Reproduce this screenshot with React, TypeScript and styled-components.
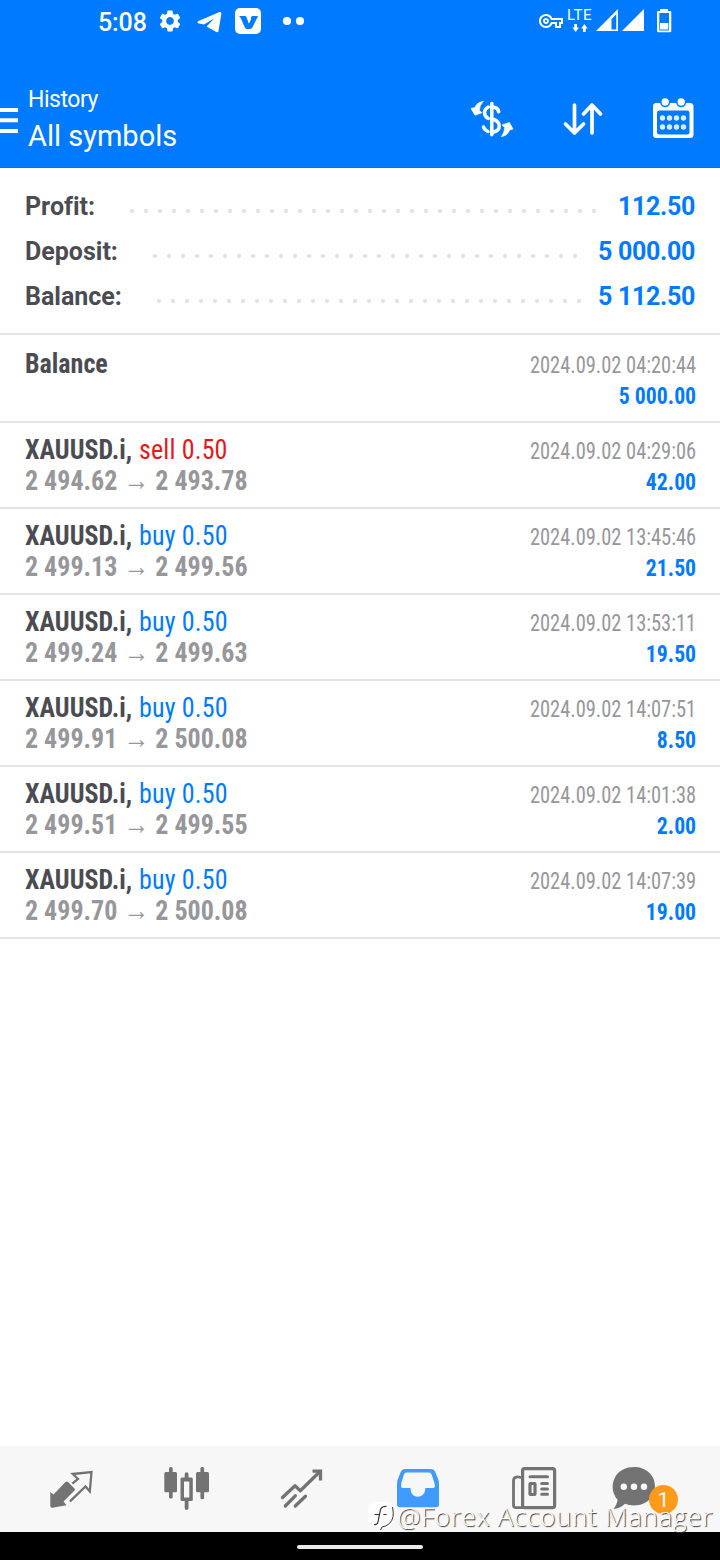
import React from 'react';
import styled, { createGlobalStyle } from 'styled-components';
import { MdSettings, MdOutlineVpnKey } from 'react-icons/md';

const GlobalStyle = createGlobalStyle`
  * { box-sizing: border-box; }
  body { margin: 0; background: #fff; font-family: Roboto, "Liberation Sans", sans-serif; }
`;

const Screen = styled.div`
  position: relative;
  width: 720px;
  height: 1560px;
  display: flex;
  flex-direction: column;
  background: #fff;
  overflow: hidden;
`;

const TopArea = styled.header`
  height: 168px;
  background: #007aff;
  color: #fff;
  border-bottom: 1px solid #0070e6;
`;

const StatusBar = styled.div`
  height: 42px;
  display: flex;
  justify-content: space-between;
  align-items: flex-start;
  padding: 0 48px 0 98px;
`;

const StatusGroup = styled.div`
  height: 42px;
  display: flex;
  align-items: center;
`;

const Clock = styled.span`
  width: 59px;
  font-size: 25px;
  font-weight: 500;
  line-height: 30px;
  padding-top: 3px;
  letter-spacing: -0.1px;
`;

const Glyph = styled.svg`
  display: block;
  flex: none;
`;

const TitleBar = styled.div`
  height: 125px;
  display: flex;
  align-items: flex-start;
`;

const Titles = styled.div`
  flex: 1;
  padding: 44px 0 0 10px;
`;

const Kicker = styled.div`
  font-size: 23px;
  line-height: 27px;
  letter-spacing: -0.45px;
`;

const Title = styled.h1`
  margin: 5px 0 0;
  font-size: 30px;
  font-weight: 400;
  line-height: 35px;
  transform: scaleX(0.967);
  transform-origin: left;
`;

const Summary = styled.section`
  height: 167px;
  padding: 16px 25px 0;
  border-bottom: 2px solid #e4e4e4;
`;

const SummaryLine = styled.div`
  height: 45px;
  display: flex;
  align-items: center;
  font-size: 25px;
  font-weight: 700;
  font-variant-ligatures: none;
  color: #4b4b52;
`;

const Leader = styled.div`
  flex: 1;
  height: 4px;
  margin: 9px 16px 0 30px;
  background: radial-gradient(circle at 7px 2px, #e3e3e3 1.8px, rgba(227, 227, 227, 0) 2.5px) 0 0 / 14px 4px repeat-x;
`;

const SummaryValue = styled.span`
  color: #007aff;
  letter-spacing: -0.32px;
`;

const Row = styled.li<{ $tall?: boolean }>`
  height: ${(p) => (p.$tall ? 88 : 86)}px;
  display: flex;
  justify-content: space-between;
  padding: ${(p) => (p.$tall ? 13 : 11)}px 24px 0 25px;
  border-bottom: 2px solid #e4e4e4;
  font-stretch: 75%;
`;

const List = styled.ul`
  flex: 1;
  margin: 0;
  padding: 0;
  list-style: none;
`;

const Deal = styled.div`
  font-size: 28px;
  line-height: 31px;
  font-weight: 700;
  transform: scaleX(0.928);
  transform-origin: left;
  color: #4b4b52;
`;

const Side = styled.span<{ $sell?: boolean }>`
  margin-left: 1px;
  font-weight: 400;
  letter-spacing: 0.15px;
  color: ${(p) => (p.$sell ? '#e5171b' : '#007aff')};
`;

const Prices = styled.div`
  color: #97979b;
`;

const Result = styled.div`
  padding-top: 2px;
  text-align: right;
  font-size: 23px;
  line-height: 31px;
`;

const Time = styled.div`
  transform: scaleX(0.888);
  transform-origin: right;
  color: #97979b;
`;

const Amount = styled.div`
  font-weight: 700;
  transform: scaleX(0.945);
  transform-origin: right;
  color: #007aff;
`;

const TabBar = styled.nav`
  height: 86px;
  display: flex;
  background: #f7f7f7;
  padding: 0 12px;
`;

const Tab = styled.div`
  position: relative;
  flex: 1;
  display: flex;
  justify-content: center;
  padding-top: 16px;
`;

const Badge = styled.span`
  position: absolute;
  left: 57px;
  top: 39px;
  width: 29px;
  height: 29px;
  border-radius: 50%;
  background: #ff9a1a;
  color: #fff;
  font-size: 21px;
  line-height: 30px;
  text-align: center;
`;

const GestureBar = styled.div`
  height: 28px;
  background: #000;
  display: flex;
  justify-content: center;
  padding-top: 13px;
`;

const Pill = styled.div`
  width: 126px;
  height: 4px;
  border-radius: 2px;
  background: #e9e9e9;
`;

const Watermark = styled.div`
  position: absolute;
  right: 7px;
  bottom: 27px;
  display: flex;
  align-items: center;
  gap: 2px;
  color: #fff;
  font-family: "Open Sans", sans-serif;
  font-weight: 300;
  font-size: 26px;
  line-height: 34px;
  letter-spacing: 0.7px;
  text-shadow: 1px 1px 1px #333;
`;

const summary = [
  ['Profit:', '112.50'],
  ['Deposit:', '5 000.00'],
  ['Balance:', '5 112.50'],
];

const deals = [
  { side: 'sell', open: '2 494.62', close: '2 493.78', time: '2024.09.02 04:29:06', amount: '42.00' },
  { side: 'buy', open: '2 499.13', close: '2 499.56', time: '2024.09.02 13:45:46', amount: '21.50' },
  { side: 'buy', open: '2 499.24', close: '2 499.63', time: '2024.09.02 13:53:11', amount: '19.50' },
  { side: 'buy', open: '2 499.91', close: '2 500.08', time: '2024.09.02 14:07:51', amount: '8.50' },
  { side: 'buy', open: '2 499.51', close: '2 499.55', time: '2024.09.02 14:01:38', amount: '2.00' },
  { side: 'buy', open: '2 499.70', close: '2 500.08', time: '2024.09.02 14:07:39', amount: '19.00' },
];

const GREY = '#737373';

const tabs = [
  {
    name: 'quotes',
    icon: (
      <>
        <path d="M10.300 30L13.500 32.500L25.500 20Q26.700 19 28 20L34.500 26.500Q35.500 27.500 34.500 28.500L23.500 39.500L26.500 43.300L12.500 45.700Q10.300 46 10.300 44Z" fill={GREY} />
        <path d="M32.300 21.700L38 17L32.700 12L51.500 10L49.800 29.500L45.500 24.500L30 39.300" fill="none" stroke={GREY} strokeWidth="2.300" />
      </>
    ),
  },
  {
    name: 'charts',
    icon: (
      <g fill={GREY}>
        <rect x="8.300" y="10" width="12.700" height="20.300" rx="1.500" />
        <rect x="13" y="5" width="3.700" height="31.500" rx="1.500" />
        <path fillRule="evenodd" d="M26 15.500h9.300q1.500 0 1.500 1.500v20.500q0 1.500-1.500 1.500H26q-1.500 0-1.500-1.500V17q0-1.500 1.500-1.500zM28 19.500v16h5.300v-16z" />
        <path d="M28.700 16v-4q0-1.700 1.900-1.700t1.900 1.700v4zM28.700 38.500v7.800q0 1.700 1.900 1.700t1.900-1.700v-7.800z" />
        <rect x="40" y="10" width="13" height="20.300" rx="1.500" />
        <rect x="44.400" y="5" width="3.700" height="32.300" rx="1.500" />
      </g>
    ),
  },
  {
    name: 'trade',
    icon: (
      <g fill="none" stroke={GREY} strokeWidth="3.300" strokeLinecap="round" strokeLinejoin="round">
        <path d="M10.500 35.500L23 23.700L28.300 28.700L47.500 10M13.300 44L23.300 33.800M23.300 44L33.500 34.200" />
        <path d="M40.500 9.200H48.500V18.500" strokeLinecap="butt" strokeLinejoin="miter" />
      </g>
    ),
  },
  {
    name: 'history',
    icon: (
      <path fillRule="evenodd" fill="#419bff" d="M17.500 7H42.500Q46 7 47.300 10L50.500 18Q51 20 51 23V42.500Q51 45.300 48.200 45.300H11.800Q9 45.300 9 42.500V23Q9 20 9.500 18L12.700 10Q14 7 17.500 7ZM18.500 10.500Q16.800 10.500 16 12.300L13.500 20.500L13 24Q13 26 15 26H22.500C22.500 31 25 34.700 29.800 34.700S37.300 31 37.300 26H45Q47 26 47 24L46.300 20.500L43.500 12.300Q42.700 10.500 41.300 10.500Z" />
    ),
  },
  {
    name: 'news',
    icon: (
      <g fill="none" stroke={GREY} strokeWidth="3.200" strokeLinecap="round">
        <rect x="18.600" y="6.600" width="32" height="39" rx="2" />
        <path d="M17 15.500Q9.500 13.500 9.500 19V43Q9.500 45.600 12 45.600H19" strokeWidth="2.800" />
        <path d="M26 14.700H43.500M37.700 21.500H43.500M37.700 27H43.500M37.700 32.300H43.500" strokeWidth="3" />
        <rect x="26" y="21.500" width="5" height="11" rx=".5" />
      </g>
    ),
  },
  {
    name: 'chat',
    icon: (
      <>
        <path d="M14 5C26 5 35 13 35 24.300S26 43.500 14 43.500Q8.500 43.500 5 41.800Q0 46.800-6.500 47Q-3 42.500-2.300 38C-9 30-8.500 21-4 13.500Q2 5 14 5Z" fill={GREY} />
        <g fill="#f7f7f7">
          <circle cx="3.800" cy="24.700" r="3.200" />
          <circle cx="14" cy="24.700" r="3.200" />
          <circle cx="24" cy="24.700" r="3.200" />
        </g>
      </>
    ),
  },
];

export default function App() {
  return (
    <Screen>
      <GlobalStyle />
      <TopArea>
        <StatusBar>
          <StatusGroup>
            <Clock>5:08</Clock>
            <MdSettings size={26} />
            <Glyph width="122" height="42" viewBox="183 0 122 42" fill="#fff">
              <path d="M198 21.300 L219.500 12 Q221.500 11.500 221.300 14 L218.500 31 Q218 33 216.300 32 L206.500 26.500 L214.500 18.300 L204 24.500 L198 23.200 Q196.800 22.300 198 21.300Z" />
              <rect x="235" y="8" width="26" height="26" rx="5" />
              <path d="M239 16h6q1 0 1.500 1.300l2.400 6.500 2.100-4.300q-.6-2 1-3.500h6l-5.500 11.300q-1 1.700-2.500 1.700h-3q-1.500 0-2.200-1.700l-3.800-8.500q-.6-1.800-2-2.800z" fill="#007aff" />
              <circle cx="287" cy="21" r="4.100" />
              <circle cx="300" cy="21" r="4.100" />
            </Glyph>
          </StatusGroup>
          <StatusGroup>
            <MdOutlineVpnKey size={24} />
            <Glyph width="109" height="42" viewBox="563 0 109 42" fill="#fff">
              <text x="567" y="20" fontSize="15" textLength="24.500">LTE</text>
              <path d="M574.300 24h2.700v3.500h2l-3.300 4.500-3.300-4.500h1.900zM583 32h2.700v-3.500h2l-3.300-4.500-3.300 4.500h1.900z" />
              <path fillRule="evenodd" d="M596 31 L618 9V31ZM611.500 19V29.500H616.300V14.300Z" />
              <path d="M622 31 L644 9V31Z" />
              <path fillRule="evenodd" d="M660 9h8v2h2q1.300 0 1.300 1.300V31q0 1.300-1.300 1.300h-11.700q-1.300 0-1.300-1.300V12.300q0-1.300 1.300-1.300H660zM659.300 13v17.500h9.700V13z" />
              <rect x="660" y="23" width="8.300" height="6.500" />
            </Glyph>
          </StatusGroup>
        </StatusBar>
        <TitleBar>
          <Glyph width="18" height="125" viewBox="0 42 18 125" fill="#fff">
            <path d="M0 108h18v4H0zM0 118.300h18v4H0zM0 129h18v4H0z" />
          </Glyph>
          <Titles>
            <Kicker>History</Kicker>
            <Title>All symbols</Title>
          </Titles>
          <Glyph width="250" height="125" viewBox="470 42 250 125" fill="none" stroke="#fff" strokeWidth="3.700" strokeLinecap="round" strokeLinejoin="round">
            <path d="M491.800 103.500V134.700M494 107.300Q498.300 108 498.700 111.700M488.300 107Q484.500 109 484.500 112.500Q484.500 116.500 488.300 118.500M494 119.500Q499.200 121.500 499.200 126Q499.200 130.500 494 132M483.500 127Q484.500 130 488 131.500" strokeWidth="3.500" />
            <path d="M483 101.500Q476.500 102.500 475 107.500L471 108.500L475 115.200L482 112.700L479.300 110.500Q479.500 105.500 483 101.500ZM501.700 136.500Q508 135.500 509.500 130L513 129L509.300 122.500L502 125L504.700 127.500Q504.500 132.500 501.700 136.500Z" fill="#fff" strokeWidth=".7" />
            <path d="M574.500 105V133M565.500 124L574.500 133L583.500 124M592 133V105M583.500 114L592 105L600.500 114" />
            <path fillRule="evenodd" stroke="none" fill="#fff" d="M656 103H690Q693.500 103 693.500 106.500V134.500Q693.500 138 690 138H656.500Q653 138 653 134.500V106.500Q653 103 656 103ZM659.500 110.500Q657 110.500 657 113V132Q657 134.500 659.500 134.500H687Q689.500 134.500 689.500 132V113Q689.500 110.500 687 110.500Z" />
            <g fill="#fff" stroke="#007aff" strokeWidth="1.500">
              <circle cx="665.200" cy="102" r="4.400" />
              <circle cx="681.200" cy="102" r="4.400" />
            </g>
            <g fill="#fff" stroke="none" opacity=".85">
              {[662.5, 669.5, 676.5, 683.5].map((x) => (
                <g key={x}>
                  <circle cx={x} cy="118" r="2.700" />
                  <circle cx={x} cy="127" r="2.700" />
                </g>
              ))}
            </g>
          </Glyph>
        </TitleBar>
      </TopArea>
      <Summary>
        {summary.map(([label, value]) => (
          <SummaryLine key={label}>
            <span>{label}</span>
            <Leader />
            <SummaryValue>{value}</SummaryValue>
          </SummaryLine>
        ))}
      </Summary>
      <List>
        <Row $tall>
          <Deal>Balance</Deal>
          <Result>
            <Time>2024.09.02 04:20:44</Time>
            <Amount>5 000.00</Amount>
          </Result>
        </Row>
        {deals.map((d) => (
          <Row key={d.time}>
            <Deal>
              XAUUSD.i, <Side $sell={d.side === 'sell'}>{d.side} 0.50</Side>
              <Prices>
                {d.open} → {d.close}
              </Prices>
            </Deal>
            <Result>
              <Time>{d.time}</Time>
              <Amount>{d.amount}</Amount>
            </Result>
          </Row>
        ))}
      </List>
      <TabBar>
        {tabs.map((t) => (
          <Tab key={t.name}>
            <Glyph width="60" height="60" viewBox="0 0 60 60" overflow="visible">
              {t.icon}
            </Glyph>
            {t.name === 'chat' && <Badge>1</Badge>}
          </Tab>
        ))}
      </TabBar>
      <GestureBar>
        <Pill />
      </GestureBar>
      <Watermark>
        <Glyph width="27" height="28" viewBox="0 0 27 28">
          <path d="M7 0H18Q26 1 26 9V16Q25 25 14 25.500L12.500 28L9 25H7Q0 24 0 17V8Q0 1 7 0Z" fill="#fff" />
          <path d="M18.500 4.500Q12.500 4 12 10L10 20Q9.500 23 6 22.500M6.500 12.500H12M15.500 12.500H18.500" fill="none" stroke="#333" strokeWidth="1.200" />
          <path d="M24.500 5Q27 16 21.500 21.500Q18 24.500 14 25L12.500 28" fill="none" stroke="#333" strokeWidth="1" />
        </Glyph>
        <span>@Forex Account Manager</span>
      </Watermark>
    </Screen>
  );
}
